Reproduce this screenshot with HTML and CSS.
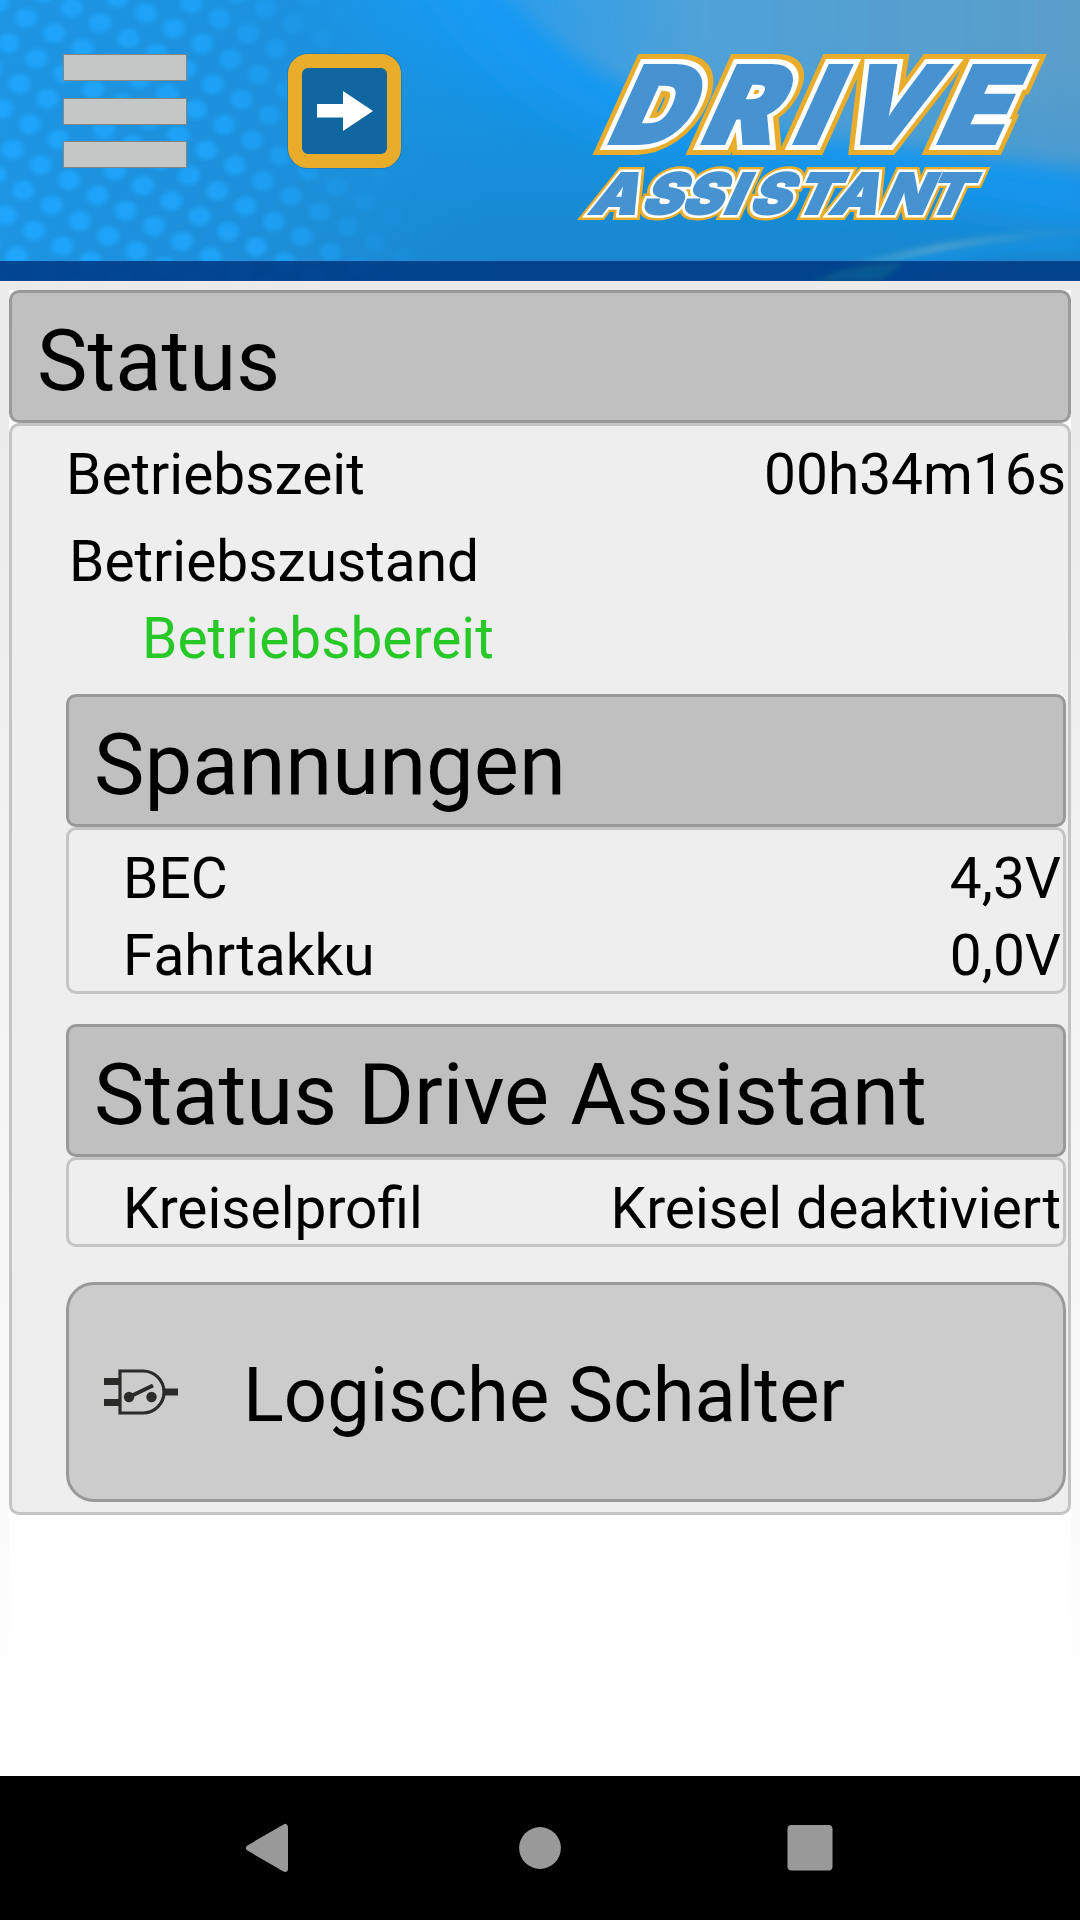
FILE: index.html
```html
<!DOCTYPE html>
<html lang="de">
<head>
  <meta charset="UTF-8">
  <title>Drive Assistant - Status</title>
  <link rel="stylesheet" href="styles.css">
</head>
<body>
  <header>
    <svg class="header-bg" viewBox="0 0 1080 281" aria-hidden="true">
      <defs>
        <linearGradient id="sky" x1="0" y1="0" x2="0" y2="1">
          <stop offset="0" stop-color="#189df5"/>
          <stop offset="0.5" stop-color="#1790dd"/>
          <stop offset="1" stop-color="#1886cc"/>
        </linearGradient>
        <linearGradient id="left" x1="0" y1="0" x2="1" y2="0">
          <stop offset="0" stop-color="#1d95e3"/>
          <stop offset="0.6" stop-color="#1d90da" stop-opacity="0.8"/>
          <stop offset="1" stop-color="#1d90da" stop-opacity="0"/>
        </linearGradient>
        <radialGradient id="dot">
          <stop offset="0.5" stop-color="#1fa5fc"/>
          <stop offset="1" stop-color="#1fa5fc" stop-opacity="0"/>
        </radialGradient>
        <pattern id="dots" width="100" height="100" patternUnits="userSpaceOnUse" patternTransform="matrix(0.283 0.153 -0.175 0.253 20.500 -2.500)">
          <circle cx="50" cy="50" r="43" fill="url(#dot)"/>
        </pattern>
        <linearGradient id="fade" x1="0" y1="230" x2="390" y2="110" gradientUnits="userSpaceOnUse">
          <stop offset="0" stop-color="#fff"/>
          <stop offset="0.6" stop-color="#fff" stop-opacity="0.8"/>
          <stop offset="0.8" stop-color="#fff" stop-opacity="0.35"/>
          <stop offset="1" stop-color="#fff" stop-opacity="0"/>
        </linearGradient>
        <mask id="dotmask"><rect width="430" height="281" fill="url(#fade)"/></mask>
        <linearGradient id="haze" x1="0" y1="0" x2="1" y2="0">
          <stop offset="0" stop-color="#53a3d8" stop-opacity="0.25"/>
          <stop offset="0.35" stop-color="#52a2d5" stop-opacity="0.95"/>
          <stop offset="1" stop-color="#5b9dc8"/>
        </linearGradient>
        <linearGradient id="hazefade" x1="0" y1="0" x2="0" y2="1">
          <stop offset="0.3" stop-color="#fff"/>
          <stop offset="1" stop-color="#fff" stop-opacity="0.6"/>
        </linearGradient>
        <mask id="hazemask"><rect x="460" width="620" height="220" fill="url(#hazefade)"/></mask>
        <linearGradient id="arc" x1="0" y1="0" x2="1" y2="0">
          <stop offset="0" stop-color="#37a0c8" stop-opacity="0.3"/>
          <stop offset="0.5" stop-color="#55a6d0"/>
          <stop offset="1" stop-color="#2b93d5" stop-opacity="0.3"/>
        </linearGradient>
        <filter id="soft"><feGaussianBlur stdDeviation="3"/></filter>
        <filter id="softer"><feGaussianBlur stdDeviation="9"/></filter>
        <filter id="glow" x="-30%" y="-60%" width="160%" height="220%"><feGaussianBlur stdDeviation="22"/></filter>
      </defs>
      <rect width="1080" height="281" fill="url(#sky)"/>
      <rect width="500" height="281" fill="url(#left)"/>
      <path d="M420 -30 C470 60 560 130 680 160 L1100 230 V150 L700 90 L520 -30Z" fill="#129af5" opacity="0.75" filter="url(#glow)"/>
      <rect width="430" height="281" fill="url(#dots)" mask="url(#dotmask)"/>
      <g mask="url(#hazemask)">
        <path d="M480 -30 C560 60 650 122 850 142 C950 152 1010 160 1110 174 V-30Z" fill="url(#haze)" filter="url(#softer)"/>
      </g>
      <path d="M800 282 C880 252 990 232 1080 229 V238 C990 240 900 256 830 282Z" fill="url(#arc)" filter="url(#soft)"/>
      <path d="M830 281 C920 248 1010 240 1080 238 V250 C1000 252 940 262 890 281Z" fill="#1492e4" opacity="0.7" filter="url(#soft)"/>
      <rect y="261" width="1080" height="20" fill="#003a84" opacity="0.87"/>
      <path d="M812 281 C840 270 865 264 905 262 L880 281Z" fill="#0e6c93" opacity="0.55" filter="url(#soft)"/>
    </svg>

    <button class="menu-btn" aria-label="Menü">
      <span></span>
      <span></span>
      <span></span>
    </button>

    <button class="arrow-btn" aria-label="Weiter">
      <svg width="56" height="40" viewBox="0 0 56 40">
        <path d="M0 13H26V0L56 20L26 40V26.500H0Z" fill="#fff"/>
      </svg>
    </button>

    <svg class="logo" width="470" height="190" viewBox="570 40 470 190">
      <defs>
        <text id="drive" class="drive" transform="translate(0 143) skewX(-24.4)" y="0" x="605 698 790 834 934">DRIVE</text>
        <text id="assistant" class="assistant" transform="translate(0 214) skewX(-24.4) scale(1.06 1)" y="0" x="554 603 641 681 705 746 781 829 871">ASSISTANT</text>
      </defs>
      <use href="#drive" class="gold-lg"/>
      <use href="#drive" class="white-lg"/>
      <use href="#drive" class="blue-lg"/>
      <use href="#assistant" class="gold-sm"/>
      <use href="#assistant" class="white-sm"/>
      <use href="#assistant" class="blue-sm"/>
    </svg>
  </header>

  <main>
    <h1 class="title">Status</h1>
    <div class="panel main-panel">
      <div class="row"><span>Betriebszeit</span><span>00h34m16s</span></div>
      <div class="row state-label">Betriebszustand</div>
      <div class="row state">Betriebsbereit</div>

      <section class="voltages">
        <h2 class="title">Spannungen</h2>
        <div class="panel">
          <div class="row"><span>BEC</span><span>4,3V</span></div>
          <div class="row"><span>Fahrtakku</span><span>0,0V</span></div>
        </div>
      </section>

      <section class="assistant-status">
        <h2 class="title">Status Drive Assistant</h2>
        <div class="panel">
          <div class="row"><span>Kreiselprofil</span><span>Kreisel deaktiviert</span></div>
        </div>
      </section>

      <button class="switch-btn">
        <svg width="75" height="48" viewBox="0 0 75 48">
          <path d="M0 13.500H15M0 34.500H15M59 24H74" stroke="#2b2b29" stroke-width="7"/>
          <path d="M16 3H39A21 21 0 0 1 39 45H16Z" fill="none" stroke="#2b2b29" stroke-width="3.200"/>
          <path d="M25 29L49 17.500" stroke="#2b2b29" stroke-width="4"/>
          <circle cx="25" cy="29" r="5.200" fill="#2b2b29"/>
          <circle cx="47.500" cy="29" r="5.200" fill="#2b2b29"/>
        </svg>
        <span>Logische Schalter</span>
      </button>
    </div>
  </main>

  <nav>
    <svg width="48" height="52" viewBox="0 0 48 52">
      <path d="M3 26L39 5V47Z" fill="#999" stroke="#999" stroke-width="6" stroke-linejoin="round"/>
    </svg>
    <svg width="48" height="52" viewBox="0 0 48 52">
      <circle cx="24" cy="26" r="20.900" fill="#999"/>
    </svg>
    <svg width="48" height="52" viewBox="0 0 48 52">
      <rect x="1.500" y="3" width="45" height="45.500" rx="4" fill="#999"/>
    </svg>
  </nav>
</body>
</html>
```
FILE: styles.css
```css
* {
  box-sizing: border-box;
}

body {
  margin: 0;
  width: 1080px;
  height: 1920px;
  display: flex;
  flex-direction: column;
  font-family: Roboto, sans-serif;
  color: #000;
  background: linear-gradient(#ebebeb 281px, #eeeeee 600px, #f4f4f4 1000px, #fafafa 1480px, #ffffff 1740px);
  overflow: hidden;
}

button {
  font-family: inherit;
  color: inherit;
  cursor: pointer;
}

header {
  position: relative;
  height: 281px;
  display: flex;
  align-items: flex-start;
  padding: 54px 40px 0 63px;
}

.header-bg {
  position: absolute;
  left: 0;
  top: 0;
  width: 100%;
  height: 100%;
}

.menu-btn {
  position: relative;
  width: 124px;
  height: 114px;
  padding: 0;
  border: none;
  background: none;
  display: flex;
  flex-direction: column;
  justify-content: space-between;
}

.menu-btn span {
  height: 27px;
  background-color: #c5c6c6;
  border: 1px solid #858585;
}

.arrow-btn {
  position: relative;
  width: 113px;
  height: 114px;
  margin-left: 101px;
  padding: 0;
  display: flex;
  align-items: center;
  justify-content: center;
  background-color: #10669f;
  border: 14px solid #e9ad2b;
  border-radius: 20px;
  box-shadow: 0 0 0 1px #1a80c0;
}

.logo {
  position: relative;
  margin: -14px 0 0 169px;
  flex-shrink: 0;
  overflow: visible;
}

.drive {
  font-family: Inter, sans-serif;
  font-size: 106px;
  font-weight: 900;
}

.assistant {
  font-family: Inter, sans-serif;
  font-size: 56.5px;
  font-weight: 900;
}

.gold-lg {
  fill: #e9ad2b;
  stroke: #e9ad2b;
  stroke-width: 24px;
}

.white-lg {
  fill: #fff;
  stroke: #fff;
  stroke-width: 14px;
}

.blue-lg {
  fill: #4793d1;
  stroke: #4793d1;
  stroke-width: 4px;
}

.gold-sm {
  fill: #e9ad2b;
  stroke: #e9ad2b;
  stroke-width: 12px;
}

.white-sm {
  fill: #fff;
  stroke: #fff;
  stroke-width: 7px;
}

.blue-sm {
  fill: #4793d1;
  stroke: #4793d1;
  stroke-width: 2px;
}

main {
  flex: 1;
  margin: 9px 9px 0;
  background-color: #fff;
}

.title {
  height: 133px;
  margin: 0;
  padding: 9px 25px 0;
  font-size: 85px;
  font-weight: 400;
  line-height: 119px;
  background-color: #c0c0c0;
  border: 3px solid #999;
  border-radius: 10px;
}

.panel {
  padding: 7px 2px 0 54px;
  background-color: #eee;
  border: 3px solid #c4c4c4;
  border-radius: 10px;
}

.main-panel {
  padding-bottom: 10px;
}

.row {
  display: flex;
  justify-content: space-between;
  height: 77px;
  padding-top: 8px;
  font-size: 56.8px;
  line-height: 67px;
}

.main-panel > .state-label {
  margin-top: 10px;
  margin-left: 3px;
}

.main-panel > .state {
  margin-left: 76px;
  color: #28c828;
}

.voltages {
  margin-top: 20px;
}

.assistant-status {
  margin-top: 30px;
}

.switch-btn {
  width: 1000px;
  height: 220px;
  margin: 35px 0 0;
  padding: 0 35px;
  display: flex;
  align-items: center;
  font-size: 75.9px;
  text-align: left;
  background-color: #ccc;
  border: 3px solid #999;
  border-radius: 28px;
}

.switch-btn span {
  margin-left: 64px;
  padding-top: 7px;
}

nav {
  height: 144px;
  padding: 0 135px;
  display: flex;
  justify-content: space-around;
  align-items: center;
  background-color: #000;
}
```
